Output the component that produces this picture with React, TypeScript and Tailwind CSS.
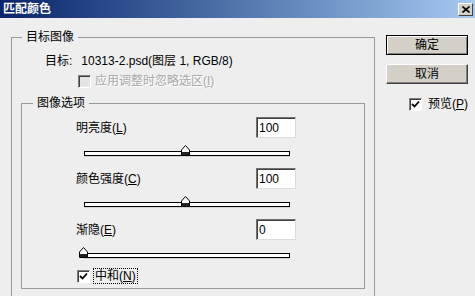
import React from 'react';

const CheckBox: React.FC<{ checked?: boolean; disabled?: boolean }> = ({ checked, disabled }) => (
    <div
        className={`w-[13px] h-[13px] shrink-0 border border-t-[#808080] border-l-[#808080] border-r-white border-b-white shadow-[inset_1px_1px_0_#404040] flex items-center justify-center ${disabled ? 'bg-[#e4e4e4]' : 'bg-white'}`}
    >
        {checked && (
            <svg width="9" height="9" viewBox="0 0 9 9">
                <path d="M1 4 L3.5 6.5 L8 1.5" stroke="#000" strokeWidth="1.8" fill="none" />
            </svg>
        )}
    </div>
);

const NumberBox: React.FC<{ value: string }> = ({ value }) => (
    <div className="w-[40px] h-[21px] bg-white border border-t-[#707070] border-l-[#707070] border-r-[#dcdcdc] border-b-[#dcdcdc] shadow-[inset_1px_1px_0_#404040] pl-[2px] flex items-center text-[12px] leading-none">
        {value}
    </div>
);

// スライダー（つまみの位置はpxで指定）
const Slider: React.FC<{ pos: number }> = ({ pos }) => (
    <div className="relative ml-[57px] w-[213px] h-[11px]">
        <div className="absolute left-[5px] bottom-0 w-[206px] h-[5px] border border-black bg-white shadow-[0_1px_0_#d0d0d0]" />
        <svg
            className="absolute top-0"
            style={{ left: pos }}
            width="10"
            height="11"
            viewBox="0 0 10 11"
        >
            <path d="M0.5 10.5 V5 L4.5 0.5 L8.5 5 V10.5 Z" fill="#fff" stroke="#000" />
            <rect x="1" y="7" width="7" height="3" fill="#222" />
        </svg>
    </div>
);

const SliderBlock: React.FC<{ label: string; hotkey: string; value: string; pos: number; first?: boolean }> = ({
    label,
    hotkey,
    value,
    pos,
    first,
}) => (
    <div className={first ? 'mt-[7px]' : 'mt-[12px]'}>
        <div className="flex items-center h-[21px]">
            <span className="ml-[54px] w-[180px] text-[12px] leading-[14px]">
                {label}(<span className="underline">{hotkey}</span>)
            </span>
            <NumberBox value={value} />
        </div>
        <div className="mt-[7px]">
            <Slider pos={pos} />
        </div>
    </div>
);

export default function App() {
    return (
        <div className="w-[475px] h-[296px] overflow-hidden bg-[#eeeeee] text-black flex flex-col font-['Liberation_Sans','Noto_Sans_CJK_SC',sans-serif]">
            {/* タイトルバー */}
            <div className="h-[18px] shrink-0 flex items-center justify-between bg-linear-to-r from-[#0a246a] to-[#a6caf0] pl-[3px] pr-[2px]">
                <span className="text-white font-bold text-[12px] leading-none">匹配颜色</span>
                <div className="w-[15px] h-[13px] bg-[#d4d0c8] border border-t-white border-l-white border-r-[#404040] border-b-[#404040] flex items-center justify-center">
                    <svg width="8" height="7" viewBox="0 0 8 7">
                        <path d="M0.5 0.5 L7.5 6.5 M7.5 0.5 L0.5 6.5" stroke="#000" strokeWidth="1.6" />
                    </svg>
                </div>
            </div>

            <div className="flex flex-1">
                {/* 目標画像 */}
                <fieldset className="ml-[11px] mt-[12px] w-[364px] h-[300px] shrink-0 border border-[#9a9a9a]">
                    <legend className="ml-[10px] px-[4px] text-[12px] leading-[14px]">目标图像</legend>
                    <div className="mt-[10px] pl-[33px] flex text-[12px] leading-[14px]">
                        <span>目标:</span>
                        <span className="ml-[9px]">10313-2.psd(图层 1, RGB/8)</span>
                    </div>
                    <div className="mt-[6px] pl-[66px] flex items-center h-[14px]">
                        <CheckBox disabled />
                        <span className="ml-[4px] text-[12px] leading-[14px] text-[#a8a8a8] [text-shadow:1px_1px_0_#fff]">
                            应用调整时忽略选区(<span className="underline">I</span>)
                        </span>
                    </div>

                    {/* 画像オプション */}
                    <fieldset className="ml-[9px] mt-[8px] w-[344px] h-[193px] border border-[#9a9a9a]">
                        <legend className="ml-[11px] px-[4px] text-[12px] leading-[14px]">图像选项</legend>
                        <SliderBlock first label="明亮度" hotkey="L" value="100" pos={102} />
                        <SliderBlock label="颜色强度" hotkey="C" value="100" pos={102} />
                        <SliderBlock label="渐隐" hotkey="E" value="0" pos={0} />
                        <div className="mt-[11px] ml-[55px] flex items-center">
                            <CheckBox checked />
                            <span className="ml-[4px] px-[1px] text-[12px] leading-[14px] outline-1 outline-dotted outline-black">
                                中和(<span className="underline">N</span>)
                            </span>
                        </div>
                    </fieldset>
                </fieldset>

                {/* ボタン */}
                <div className="ml-[11px] w-[82px] flex flex-col">
                    <button className="mt-[17px] h-[20px] border border-black bg-[#d4d0c8] shadow-[inset_1px_1px_0_#fff,inset_-1px_-1px_0_#808080] text-[12px] leading-none">
                        确定
                    </button>
                    <button className="mt-[9px] h-[20px] border border-t-white border-l-white border-r-[#404040] border-b-[#404040] bg-[#d4d0c8] shadow-[inset_-1px_-1px_0_#808080] text-[12px] leading-none">
                        取消
                    </button>
                    <div className="mt-[13px] pl-[23px] flex items-center">
                        <CheckBox checked />
                        <span className="ml-[6px] text-[12px] leading-[14px]">
                            预览(<span className="underline">P</span>)
                        </span>
                    </div>
                </div>
            </div>
        </div>
    );
}
